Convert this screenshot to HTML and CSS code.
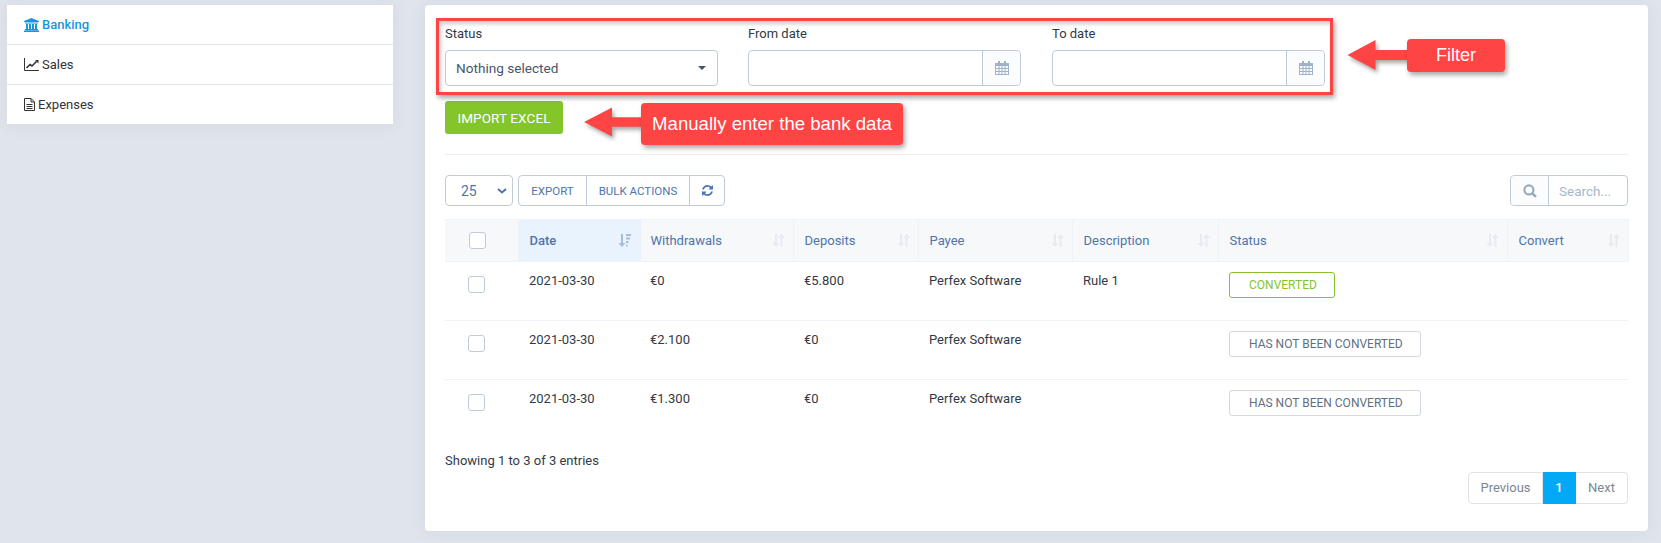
FILE: index.html
```html
<!doctype html>
<html>
<head>
  <title>Banking</title>
  <link rel="stylesheet" href="styles.css">
</head>
<body>
  <svg class="defs" width="0" height="0">
    <symbol id="cal" viewBox="0 0 14 14">
      <path d="M3 0h2v3H3zM9 0h2v3H9z"/>
      <path fill-rule="evenodd" d="M0 2h14v12H0zM1 5v2h2.5V5zM4.5 5v2h2V5zM7.5 5v2h2V5zM10.5 5v2H13V5zM1 8v2h2.5V8zM4.5 8v2h2V8zM7.5 8v2h2V8zM10.5 8v2H13V8zM1 11v2h2.5v-2zM4.5 11v2h2v-2zM7.5 11v2h2v-2zM10.5 11v2H13v-2z"/>
    </symbol>
    <symbol id="sort" viewBox="0 0 13 13">
      <path d="M3 0h2v9h2.500L4 13 .5 9H3zM8.500 13V4H6l3.500-4L13 4h-2.500v9z"/>
    </symbol>
  </svg>

  <div class="page">
    <ul class="side">
      <li class="active">
        <svg class="side-ico bank" viewBox="0 0 15 14"><path d="M7.500 0L15 3v1H0V3zM1 4.500h13v1H1zM2 6h2v5H2zM5 6h2v5H5zM8 6h2v5H8zM11 6h2v5h-2zM1 11h13v1.200H1zM0 12.500h15V14H0z"/></svg>
        Banking
      </li>
      <li>
        <svg class="side-ico chart" viewBox="0 0 15 13"><path d="M.5 0v12.500H15" fill="none" stroke="currentColor"/><path d="M2.500 10L6 6.500l2 1.500L12.500 3.500" fill="none" stroke="currentColor" stroke-width="1.600"/><path d="M11 2h3.500v3.500z"/></svg>
        Sales
      </li>
      <li>
        <svg class="side-ico doc" viewBox="0 0 11 13"><path d="M.5.500h6.500l3.500 3.500v8.500H.5zM7 .5V4h3.500M2.500 6.500h6M2.500 8.500h6M2.500 10.500h6" fill="none" stroke="currentColor"/></svg>
        Expenses
      </li>
    </ul>

    <div class="panel">
      <div class="filters">
        <div>
          <label>Status</label>
          <div class="picker">Nothing selected<span class="caret"></span></div>
        </div>
        <div>
          <label>From date</label>
          <div class="date">
            <input type="text">
            <span class="date-btn"><svg class="cal"><use href="#cal"/></svg></span>
          </div>
        </div>
        <div>
          <label>To date</label>
          <div class="date">
            <input type="text">
            <span class="date-btn"><svg class="cal"><use href="#cal"/></svg></span>
          </div>
        </div>
      </div>

      <button class="import">IMPORT EXCEL</button>
      <hr>

      <div class="tools">
        <div class="size">25
          <svg class="chev" viewBox="0 0 10 6"><path d="M1 1l4 3.500L9 1" fill="none" stroke="currentColor" stroke-width="2"/></svg>
        </div>
        <div class="btns">
          <button class="export">EXPORT</button>
          <button class="bulk">BULK ACTIONS</button>
          <button class="reload">
            <svg viewBox="0 0 1536 1536"><path d="M1511 928q0 5-1 7-64 268-268 434.500t-478 166.500q-146 0-282.500-55t-243.500-157l-129 129q-19 19-45 19t-45-19-19-45v-448q0-26 19-45t45-19h448q26 0 45 19t19 45-19 45l-137 137q71 66 161 102t187 36q134 0 250-65t186-179q11-17 53-117 8-23 30-23h192q13 0 22.500 9.500t9.500 22.500zm25-800v448q0 26-19 45t-45 19h-448q-26 0-45-19t-19-45 19-45l138-138q-148-137-349-137-134 0-250 65t-186 179q-11 17-53 117-8 23-30 23h-199q-13 0-22.500-9.500t-9.500-22.500v-7q65-268 270-434.500t480-166.500q146 0 284 55.500t245 156.500l130-129q19-19 45-19t45 19 19 45z"/></svg>
          </button>
        </div>
        <div class="search">
          <span class="search-ico"><svg viewBox="0 0 13 13"><circle cx="5.500" cy="5.500" r="4.200" fill="none" stroke="currentColor" stroke-width="2"/><path d="M8.500 8.500L12 12" stroke="currentColor" stroke-width="2.400"/></svg></span>
          <input type="text" placeholder="Search...">
        </div>
      </div>

      <table class="grid">
        <colgroup>
          <col class="c1"><col class="c2"><col class="c3"><col class="c4"><col class="c5"><col class="c6"><col class="c7"><col class="c8">
        </colgroup>
        <thead>
          <tr>
            <th class="check"><input type="checkbox"></th>
            <th class="sorted"><div class="th">Date
              <svg class="sort-on" viewBox="0 0 13 13"><path d="M3 0h2v9h2.500L4 13 .5 9H3zM8 0h5v2H8zM8 3.500h4v2H8zM8 7h2.500v2H8zM8 10.500h1.500v2H8z"/></svg>
            </div></th>
            <th><div class="th">Withdrawals<svg class="sort"><use href="#sort"/></svg></div></th>
            <th><div class="th">Deposits<svg class="sort"><use href="#sort"/></svg></div></th>
            <th><div class="th">Payee<svg class="sort"><use href="#sort"/></svg></div></th>
            <th><div class="th">Description<svg class="sort"><use href="#sort"/></svg></div></th>
            <th><div class="th">Status<svg class="sort"><use href="#sort"/></svg></div></th>
            <th><div class="th">Convert<svg class="sort"><use href="#sort"/></svg></div></th>
          </tr>
        </thead>
        <tbody>
          <tr>
            <td class="check"><input type="checkbox"></td>
            <td>2021-03-30</td>
            <td>€0</td>
            <td>€5.800</td>
            <td>Perfex Software</td>
            <td>Rule 1</td>
            <td><span class="tag done">CONVERTED</span></td>
            <td></td>
          </tr>
          <tr>
            <td class="check"><input type="checkbox"></td>
            <td>2021-03-30</td>
            <td>€2.100</td>
            <td>€0</td>
            <td>Perfex Software</td>
            <td></td>
            <td><span class="tag">HAS NOT BEEN CONVERTED</span></td>
            <td></td>
          </tr>
          <tr>
            <td class="check"><input type="checkbox"></td>
            <td>2021-03-30</td>
            <td>€1.300</td>
            <td>€0</td>
            <td>Perfex Software</td>
            <td></td>
            <td><span class="tag">HAS NOT BEEN CONVERTED</span></td>
            <td></td>
          </tr>
        </tbody>
      </table>

      <p class="info">Showing 1 to 3 of 3 entries</p>
      <div class="pager">
        <a class="prev">Previous</a><a class="current">1</a><a class="next">Next</a>
      </div>

      <!-- annotations drawn over the screenshot -->
      <div class="mark"></div>
      <svg class="arrow arrow-import" viewBox="0 0 60 32"><path d="M0 16L29 1v10h31v10H29v10z"/></svg>
      <div class="note note-import">Manually enter the bank data</div>
      <svg class="arrow arrow-filter" viewBox="0 0 60 30"><path d="M0 15L28 0v10h32v10H28v10z"/></svg>
      <div class="note note-filter">Filter</div>
    </div>
  </div>
</body>
</html>
```

FILE: styles.css
```css
* { box-sizing: border-box; }

body {
  margin: 0;
  background: #e0e5ed;
  font-family: Roboto, "Liberation Sans", sans-serif;
  font-size: 13px;
  line-height: 18px;
  color: #323a45;
}

.defs { display: block; height: 0; }

.page {
  display: flex;
  align-items: flex-start;
  padding: 5px 13px 12px 7px;
}

/* side menu */
.side {
  width: 386px;
  margin: 0 32px 0 0;
  padding: 0;
  list-style: none;
  background: #fff;
  box-shadow: 0 1px 15px 1px rgba(90, 90, 90, .08);
}
.side li {
  display: flex;
  align-items: center;
  height: 40px;
  padding-left: 17px;
  border-bottom: 1px solid #e5e6e9;
  color: #333;
}
.side li:last-child { height: 39px; border-bottom: 0; }
.side li.active { color: #1a96dc; font-weight: 500; }
.side-ico { flex: none; margin-right: 3px; fill: currentColor; }
.bank { width: 15px; height: 14px; }
.chart { width: 15px; height: 13px; }
.doc { width: 11px; height: 13px; }

/* main panel */
.panel {
  position: relative;
  width: 1223px;
  height: 526px;
  padding: 20px 20px 0;
  background: #fff;
  border-radius: 4px;
  box-shadow: 0 1px 15px 1px rgba(90, 90, 90, .08);
}

.filters {
  display: grid;
  grid-template-columns: 273px 273px 274px;
  column-gap: 30px;
}
.filters > div:last-child { margin-left: 1px; }
.filters label { display: block; margin-bottom: 7px; }

.picker, .date {
  position: relative;
  display: flex;
  height: 36px;
  border: 1px solid #bfcbd9;
  border-radius: 4px;
}
.picker { align-items: center; padding-left: 10px; color: #475569; font-size: 13.600px; }
.caret {
  position: absolute;
  right: 11px;
  top: 15px;
  border: 4px solid transparent;
  border-top-color: #475569;
  border-bottom: 0;
}
.date input {
  flex: 1;
  min-width: 0;
  border: 0;
  background: none;
  outline: 0;
}
.date-btn {
  display: flex;
  flex: none;
  align-items: center;
  justify-content: center;
  width: 38px;
  border-left: 1px solid #bfcbd9;
  border-radius: 0 4px 4px 0;
  background: #fbfcfe;
}
.cal { width: 14px; height: 14px; fill: #9fb2cc; }

.import {
  display: block;
  width: 118px;
  height: 33px;
  margin-top: 15px;
  border: 0;
  border-radius: 3px;
  background: #84c529;
  color: #fff;
  font: 400 13.500px Roboto, sans-serif;
  letter-spacing: .1px;
}

hr {
  height: 1px;
  margin: 20px 0;
  border: 0;
  background: #e9eef3;
}

/* table tools */
.tools { display: flex; height: 31px; }
.size {
  display: flex;
  align-items: center;
  width: 68px;
  padding-left: 15px;
  border: 1px solid #bfcbd9;
  border-radius: 4px;
  color: #4e75ad;
  font-size: 14px;
}
.chev { width: 10px; height: 6px; margin-left: auto; margin-right: 5px; color: #4e75ad; }
.btns {
  display: flex;
  margin-left: 5px;
  border: 1px solid #bfcbd9;
  border-radius: 4px;
}
.btns button {
  padding: 0;
  border: 0;
  border-left: 1px solid #bfcbd9;
  background: none;
  color: #4e75ad;
  font: 400 11.500px Roboto, sans-serif;
}
.btns .export { width: 67px; border-left: 0; }
.btns .bulk { width: 103px; }
.btns .reload { display: flex; align-items: center; justify-content: center; width: 35px; }
.reload svg { width: 11px; height: 11px; fill: #4e75ad; }

.search {
  display: flex;
  width: 118px;
  margin-left: auto;
  border: 1px solid #bfcbd9;
  border-radius: 4px;
}
.search-ico {
  display: flex;
  flex: none;
  align-items: center;
  justify-content: center;
  width: 38px;
  border-right: 1px solid #bfcbd9;
  background: #fbfcfe;
  color: #9aaabd;
  border-radius: 4px 0 0 4px;
}
.search-ico svg { width: 14px; height: 14px; }
.search input {
  flex: 1;
  min-width: 0;
  padding: 0 0 0 10px;
  border: 0;
  background: none;
  outline: 0;
  font: 13.500px Roboto, sans-serif;
}
.search input::placeholder { color: #a9b8c9; opacity: 1; }

/* table */
.grid {
  width: 1183px;
  margin-top: 13px;
  table-layout: fixed;
  border-collapse: collapse;
}
.c1 { width: 73px; }
.c2 { width: 122px; }
.c3 { width: 153px; }
.c4 { width: 125px; }
.c5 { width: 154px; }
.c6 { width: 146px; }
.c7 { width: 289px; }
.c8 { width: 121px; }

.grid th {
  height: 42px;
  padding: 0 8px 0 11px;
  border: 1px solid #edf3f9;
  border-width: 1px 1px 1px 0;
  background: #f6f8fa;
  color: #4e75ad;
  font-weight: 400;
  text-align: left;
}
.grid th.sorted { padding-right: 9px; background: #e8f3fd; font-weight: 500; border-right-color: #e8f3fd; }
.grid th:nth-child(3), .grid td:nth-child(3) { padding-left: 10px; }
.th { display: flex; align-items: center; justify-content: space-between; }
.sort { width: 13px; height: 13px; fill: #e6ebf1; }
.sort-on { width: 13px; height: 13px; fill: #a5bddb; }

.grid td {
  height: 59px;
  padding: 10px 0 0 11px;
  border-bottom: 1px solid #edf3f9;
  vertical-align: top;
}
.grid tbody tr:last-child td { border-bottom: 0; }
.grid .check { padding: 0 0 0 24px; }
.grid td.check { padding: 14px 0 0 23px; }

input[type=checkbox] {
  display: block;
  width: 17px;
  height: 17px;
  margin: 0;
  appearance: none;
  background: #fff;
  border: 1px solid #bfcbd9;
  border-radius: 3px;
}

.tag {
  display: inline-block;
  height: 26px;
  padding: 0 17px 0 19px;
  border: 1px solid #d3d7de;
  border-radius: 3px;
  color: #5f6f82;
  font-size: 12px;
  line-height: 24px;
}
.tag.done { border-color: #84c529; color: #84c529; }

.info { margin: 13px 0 0; }

.pager {
  display: flex;
  justify-content: flex-end;
  margin-top: 2px;
}
.pager a {
  display: block;
  height: 32px;
  border: 1px solid #e0e2e7;
  border-left: 0;
  color: #7b8794;
  line-height: 30px;
  text-align: center;
}
.pager .prev { width: 75px; border-left: 1px solid #e0e2e7; border-radius: 4px 0 0 4px; }
.pager .next { width: 52px; border-radius: 0 4px 4px 0; }
.pager .current {
  width: 33px;
  border-color: #03a9f4;
  background: #03a9f4;
  color: #fff;
  font-weight: 500;
}

/* annotations */
.mark {
  position: absolute;
  left: 11px;
  top: 13px;
  width: 897px;
  height: 77px;
  border: 3px solid #ff4444;
  box-shadow: 2px 3px 5px rgba(0, 0, 0, .35), inset 2px 3px 4px rgba(0, 0, 0, .2);
}
.note {
  position: absolute;
  display: flex;
  align-items: center;
  justify-content: center;
  background: #ff4444;
  border-radius: 4px;
  box-shadow: 2px 3px 5px rgba(0, 0, 0, .35);
  color: #fff;
  font: 18px "Liberation Sans", Arial, sans-serif;
}
.note-import { left: 216px; top: 98px; width: 262px; height: 42px; font-size: 18.600px; }
.note-filter { left: 982px; top: 34px; width: 98px; height: 33px; }
.arrow {
  position: absolute;
  fill: #ff4444;
  filter: drop-shadow(2px 3px 2px rgba(0, 0, 0, .35));
}
.arrow-import { left: 159px; top: 101px; width: 58px; height: 32px; }
.arrow-filter { left: 922px; top: 35px; width: 61px; height: 30px; }
```
